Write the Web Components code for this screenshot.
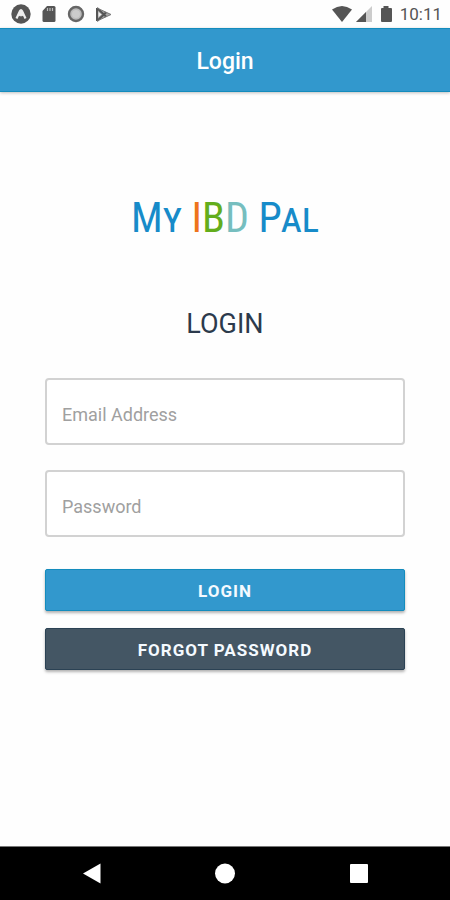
<!DOCTYPE html>
<html lang="en">
<head>
<meta charset="utf-8">
<meta name="viewport" content="width=device-width, initial-scale=1">
<title>Login</title>
<style>
    body {
        margin: 0;
        font-family: Roboto, "Liberation Sans", sans-serif;
        background: #fefefe;
    }
</style>
</head>
<body>
<login-app></login-app>

<script>
const define = (name, html) => {
  const template = document.createElement("template");
  template.innerHTML = html;

  window.customElements.define(name, class extends HTMLElement {
    constructor() {
      super();
      this.attachShadow({ mode: "open" });
      this.shadowRoot.appendChild(template.content.cloneNode(true));
    }
  });
};

define("status-bar", `
<style>
    :host {
        display: flex;
        align-items: center;
        justify-content: space-between;
        height: 28px;
        padding: 0 8px 0 11px;
        box-sizing: border-box;
        color: #555;
        font-size: 17px;
    }

    div {
        display: flex;
        align-items: center;
    }

    .left {
        gap: 8px;
    }

    .right {
        gap: 4px;
    }

    svg {
        display: block;
    }

    time {
        line-height: 20px;
    }
</style>
<div class="left">
    <svg width="20" height="20" viewBox="0 0 20 20">
        <circle cx="10" cy="10" r="9.7" fill="#555"/>
        <path d="M5.5 14.5 9 7q1-2 2 0l3.500 7.500M8.500 12 10 9.500l1.500 2.500" fill="none" stroke="#eee" stroke-width="2.2"/>
    </svg>
    <svg width="20" height="20" viewBox="0 0 20 20">
        <path d="M8 2h7q1.500 0 1.500 1.500v13q0 1.500-1.500 1.500H5q-1.500 0-1.500-1.500V7z" fill="#555"/>
        <path d="M8.500 4v3M11 4v3M13.500 4v3" stroke="#bbb" stroke-width="1.200"/>
    </svg>
    <svg width="20" height="20" viewBox="0 0 20 20">
        <circle cx="9" cy="10" r="7" fill="#bbb" stroke="#666" stroke-width="2.4"/>
        <circle cx="9" cy="10" r="4" fill="#ccc"/>
    </svg>
    <svg width="20" height="20" viewBox="0 0 20 20">
        <path d="M2 4 16 10.500 2 17z" fill="#aaa"/>
        <path d="M2 4 11 12.500M2 17l9-8.500M2 4v13" fill="none" stroke="#555" stroke-width="2"/>
        <path d="M2 4 16 10.500 2 17" fill="none" stroke="#777" stroke-width="1"/>
        <path d="M3.500 8v5l3-2.500z" fill="#eee"/>
    </svg>
</div>
<div class="right">
    <svg width="20" height="18" viewBox="0 0 20 18">
        <path d="M0 4.500Q10-2.500 20 4.500L10 17z" fill="#555"/>
    </svg>
    <svg width="16" height="16" viewBox="0 0 16 16">
        <path d="M16 0v16H0z" fill="#ccc"/>
        <path d="M10 6v10H0z" fill="#555"/>
    </svg>
    <svg width="20" height="18" viewBox="0 0 20 18">
        <path d="M7.500 1h5v2H15q1 0 1 1v12q0 1-1 1H6q-1 0-1-1V4q0-1 1-1h1.500z" fill="#555"/>
    </svg>
    <time>10:11</time>
</div>
`);

define("title-bar", `
<style>
    :host {
        display: block;
        background: #3298cd;
        border-top: 1px solid #148cbd;
        border-bottom: 1px solid #148cbd;
        box-shadow: 0 1px 3px rgba(0, 0, 0, .25);
        color: white;
    }

    h1 {
        margin: 0;
        padding: 18px 16px 14px;
        text-align: center;
        font-size: 23px;
        line-height: 30px;
        font-weight: 500;
    }
</style>
<h1><slot></slot></h1>
`);

define("brand-logo", `
<style>
    :host {
        display: block;
        text-align: center;
        font-family: "Roboto Condensed", "Liberation Sans Narrow", "Liberation Sans", sans-serif;
        font-size: 42px;
        line-height: 60px;
        font-variant: small-caps;
        color: #178bc9;
    }

    .i { color: #ee741b; }
    .b { color: #63ad1c; }
    .d { color: #76bebf; }
</style>
My <span class="i">I</span><span class="b">B</span><span class="d">D</span> Pal
`);

class TextField extends HTMLElement {
  constructor() {
    super();
    this.attachShadow({ mode: "open" });
    const label = this.getAttribute("label");
    const type = this.getAttribute("type");
    this.shadowRoot.innerHTML = `
<style>
    :host {
        display: block;
    }

    input {
        display: block;
        width: 100%;
        box-sizing: border-box;
        height: 67px;
        padding: 23px 15px 18px;
        border: 2px solid #d2d2d2;
        border-radius: 4px;
        background: white;
        color: #222;
        font: inherit;
        font-size: 18px;
        line-height: 24px;
    }

    input::placeholder {
        color: #a0a0a0;
        opacity: 1;
    }
</style>
<input type="${type}" placeholder="${label}" aria-label="${label}">
`;
  }
}

window.customElements.define("text-field", TextField);

define("action-button", `
<style>
    :host {
        display: block;
    }

    button {
        display: block;
        width: 100%;
        padding: 11px 10px 9px;
        border: 1px solid var(--edge, #148cbd);
        border-radius: 2px;
        background: var(--fill, #3298cd);
        box-shadow: 0 2px 3px rgba(0, 0, 0, .3);
        color: #f4faff;
        font: inherit;
        font-size: 17px;
        line-height: 20px;
        font-weight: 700;
        letter-spacing: 1px;
        text-transform: uppercase;
    }
</style>
<button type="button"><slot></slot></button>
`);

define("login-form", `
<style>
    :host {
        display: block;
        padding: 0 10%;
    }

    h2 {
        margin: 0 0 38px;
        text-align: center;
        color: #2c3a4c;
        font-size: 27px;
        line-height: 32px;
        font-weight: 400;
    }

    form {
        display: flex;
        flex-direction: column;
        gap: 25px;
    }

    .actions {
        display: flex;
        flex-direction: column;
        gap: 17px;
        margin-top: 7px;
    }

    .forgot {
        --fill: #445664;
        --edge: #2b4254;
    }
</style>
<h2>LOGIN</h2>
<form>
    <text-field type="email" label="Email Address"></text-field>
    <text-field type="password" label="Password"></text-field>
    <div class="actions">
        <action-button>Login</action-button>
        <action-button class="forgot">Forgot Password</action-button>
    </div>
</form>
`);

define("nav-keys", `
<style>
    :host {
        display: flex;
        justify-content: space-between;
        padding: 0 18%;
        background: black;
        border-top: 1px solid #777;
    }

    button {
        display: block;
        width: 22px;
        padding: 16px 0;
        border: 0;
        background: none;
    }

    svg {
        display: block;
        fill: white;
    }
</style>
<button type="button" aria-label="Back">
    <svg width="22" height="21" viewBox="0 0 22 21"><path d="M2 10.500 19.500 0.500v20z"/></svg>
</button>
<button type="button" aria-label="Home">
    <svg width="22" height="21" viewBox="0 0 22 21"><circle cx="11" cy="10.500" r="10"/></svg>
</button>
<button type="button" aria-label="Recent apps">
    <svg width="22" height="21" viewBox="0 0 22 21"><rect x="3" y="1" width="18" height="19" rx="1"/></svg>
</button>
`);

define("login-app", `
<style>
    :host {
        display: flex;
        flex-direction: column;
        min-height: 100vh;
    }

    main {
        flex: 1;
        padding-top: 96px;
    }

    brand-logo {
        margin-bottom: 60px;
    }
</style>
<status-bar></status-bar>
<title-bar>Login</title-bar>
<main>
    <brand-logo></brand-logo>
    <login-form></login-form>
</main>
<nav-keys></nav-keys>
`);
</script>
</body>
</html>
